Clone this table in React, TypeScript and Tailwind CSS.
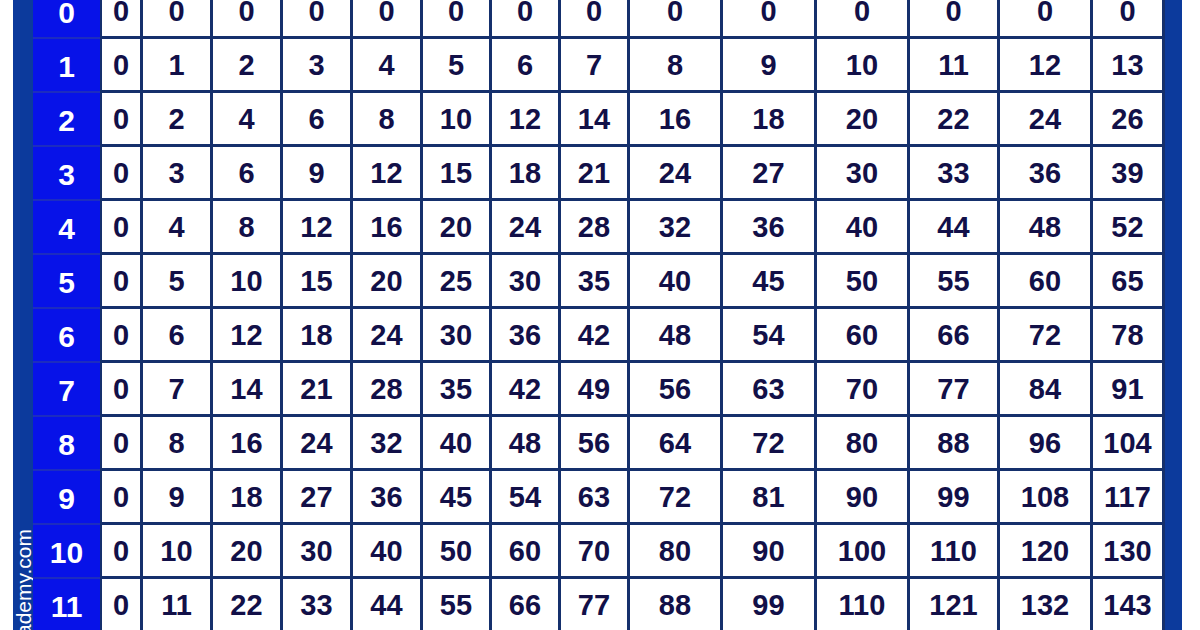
const rows = Array.from({ length: 12 }, (_, i) => i);
const cols = Array.from({ length: 14 }, (_, j) => j);

export default function App() {
  return (
    <div className="w-[1200px] h-[630px] overflow-hidden bg-white flex pl-[13px] font-['Liberation_Sans',Arial,sans-serif]">
      <div className="flex h-full bg-[#0c3a9c]">
        {/* left frame strip with the site name */}
        <div className="w-[20px] h-full flex flex-col justify-end items-center overflow-hidden">
          <span className="[writing-mode:vertical-rl] rotate-180 text-white text-[21px] leading-[20px] mb-[-6px] pr-[1px]">
            ademy.com
          </span>
        </div>

        <div className="-mt-[15px] grid grid-cols-[67px_43px_70px_70px_70px_70px_69px_69px_69px_93px_94px_93px_90px_93px_72px] auto-rows-[54px]">
          {rows.map((r) => (
            <Row key={r} r={r} />
          ))}
        </div>

        <div className="w-[17px] h-full" />
      </div>
    </div>
  );
}

function Row({ r }: { r: number }) {
  return (
    <>
      <div className="bg-[#0712e8] border-b-2 border-[#1c2cc0] flex items-center justify-center text-white font-bold text-[30px] pt-[2px]">
        {r}
      </div>
      {cols.map((c) => (
        <div
          key={c}
          className={
            "bg-white border-b-[3px] border-r-[3px] border-[#15306c] flex items-center justify-center text-[#121048] font-bold text-[29px] pt-[3px]" +
            (c === 0 ? " border-l-2" : "")
          }
        >
          {r * c}
        </div>
      ))}
    </>
  );
}
